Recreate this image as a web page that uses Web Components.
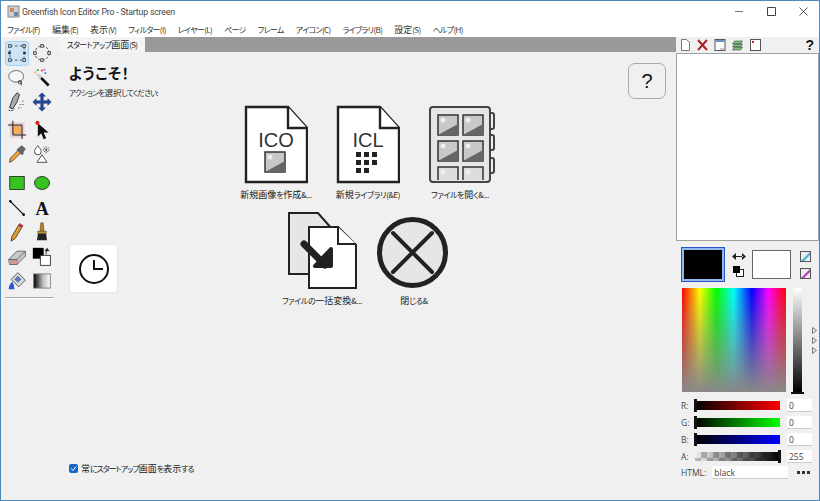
<!DOCTYPE html>
<html lang="ja">
<head>
<meta charset="utf-8">
<title>Greenfish Icon Editor Pro - Startup screen</title>
<style>
    html, body { margin: 0; height: 100%; background: #f0f0f0; overflow: hidden; }
    body { font: 9px "Noto Sans CJK JP", "Noto Sans", sans-serif; color: #222; }
</style>
</head>
<body>
<gf-window>
    <gf-titlebar>Greenfish Icon Editor Pro - Startup screen</gf-titlebar>
    <gf-menubar></gf-menubar>
    <div style="display:flex;flex:1;min-height:0">
        <gf-toolbox></gf-toolbox>
        <gf-startup></gf-startup>
        <gf-sidepanel></gf-sidepanel>
    </div>
</gf-window>

<script>
/**
 * The original UI font has narrow kana and latin next to full-width kanji.
 * Wrap everything that isn't a kanji in a tighter run to get the same widths.
 */
function squeeze(text, spacing = -0.6) {
    return text.replace(/[^\u4e00-\u9fff]+/g, run => `<span style="font-size:.88em;letter-spacing:${spacing}px">${run}</span>`);
}

const ICONS = {
    select: `<rect x="3.5" y="3.5" width="17" height="17" fill="none" stroke="#333" stroke-dasharray="3 3"/><g fill="#fff" stroke="#222"><rect x="2" y="2" width="3" height="3"/><rect x="19" y="2" width="3" height="3"/><rect x="2" y="19" width="3" height="3"/><rect x="19" y="19" width="3" height="3"/><rect x="2" y="11" width="2" height="2"/><rect x="20" y="11" width="2" height="2"/></g>`,
    ellipse: `<circle cx="12" cy="12" r="8.5" fill="none" stroke="#333" stroke-dasharray="3 2"/><g fill="#fff" stroke="#222"><rect x="10.5" y="2" width="3" height="3"/><rect x="10.5" y="19" width="3" height="3"/><rect x="2" y="10.5" width="3" height="3"/><rect x="19" y="10.5" width="3" height="3"/></g>`,
    lasso: `<ellipse cx="11" cy="10" rx="9" ry="7" fill="#f6f6f6" stroke="#555"/><path d="M15 16c2 1 3 3 2 5" fill="none" stroke="#444"/><circle cx="15.500" cy="17" r="2" fill="none" stroke="#333"/>`,
    wand: `<path d="M10 11l10 10" stroke="#111" stroke-width="3.200"/><path d="M6 7l5 5" stroke="#ccc" stroke-width="3.200"/><circle cx="12" cy="3" r="1.300" fill="#e33"/><circle cx="7" cy="2.500" r="1.300" fill="#4a4"/><circle cx="16" cy="6" r="1.300" fill="#39c"/><circle cx="4" cy="5" r="1.200" fill="#da3"/><circle cx="15" cy="2" r="1" fill="#a4c"/>`,
    brushsel: `<path d="M3 19L7 7l5-6 3 2-3 9-5 8z" fill="#aaa" stroke="#222"/><path d="M2 22c3 1 6 0 7-2" fill="none" stroke="#222" stroke-dasharray="2 1"/><path d="M15 15h5M13 19h4M18 11h3" stroke="#666" stroke-dasharray="2 1"/>`,
    move: `<path d="M12 1l4 4h-2.500v5.500H19V8l4 4-4 4v-2.500h-5.500V19H16l-4 4-4-4h2.500v-5.500H5V16l-4-4 4-4v2.500h5.500V5H8z" fill="#1f4a9c" stroke="#10265c" stroke-width=".6"/>`,
    crop: `<rect x="3" y="3" width="18" height="18" fill="#e8b8b0" opacity=".55"/><rect x="7.500" y="7.500" width="9" height="9" fill="#fdb04a" stroke="#c98"/><path d="M7 1v17h16M1 6h17v17" fill="none" stroke="#222" stroke-width="1.200"/>`,
    pointer: `<path d="M7 4v16l4-4 3 7 3-1-3-7h6z" fill="#111"/><circle cx="6.500" cy="3.500" r="2.500" fill="#d22"/>`,
    dropper: `<path d="M4 17L14 7l3 3L7 20l-4 2z" fill="#f3a533" stroke="#333" stroke-width=".9"/><path d="M14 5l4-3 4 4-3 4 1 1-2 2-6-6 2-2z" fill="#667" stroke="#222" stroke-width=".6"/>`,
    replace: `<path d="M7 2c-3 4-4 5-4 7a4 4 0 0 0 8 0c0-2-1-3-4-7z" fill="#fff" stroke="#333"/><path d="M17 3v8M13 7h8M14 4l6 6M20 4l-6 6" stroke="#444" stroke-dasharray="2 1"/><path d="M12 13l6 9H6z" fill="#fff" stroke="#333"/>`,
    rect: `<rect x="3.300" y="4.200" width="17.400" height="15.600" fill="#36c21f" stroke="#222"/>`,
    oval: `<ellipse cx="12" cy="12" rx="9" ry="7.800" fill="#36c21f" stroke="#222"/>`,
    line: `<path d="M4 4l16 16" stroke="#111" stroke-width="1.500"/><circle cx="4" cy="4" r="1.600" fill="#111"/><circle cx="20" cy="20" r="1.600" fill="#111"/>`,
    text: `<text x="12" y="20" text-anchor="middle" font-family="Liberation Serif" font-weight="700" font-size="22" fill="#111">A</text>`,
    pencil: `<path d="M6 17L15 2l4 2.500-9 15-5 3.500z" fill="#e79a2a" stroke="#333"/><path d="M15 2l4 2.500-1.500 2.500-4-2.500z" fill="#d0284a"/>`,
    brush: `<path d="M10.500 1h3l1 10h-5z" fill="#c07a20" stroke="#543" stroke-width=".6"/><rect x="7" y="11" width="10" height="3" fill="#c8962f" stroke="#333" stroke-width=".6"/><path d="M7 14h10l1 8H6z" fill="#222"/>`,
    eraser: `<path d="M2 15L12 5h10v6L12 21H3z" fill="#c9c9c9" stroke="#555"/><path d="M2 15h10l10-10M12 15v6" fill="none" stroke="#555"/><path d="M2.500 15.500h9.500v5H3z" fill="#c99"/>`,
    swapcolor: `<rect x="1" y="1" width="13" height="13" fill="#000"/><rect x="10" y="10" width="12" height="12" fill="#fff" stroke="#222"/><path d="M18 1l3 4h-6z" fill="#222"/><path d="M17 5v4" stroke="#222"/>`,
    fill: `<path d="M13 3l9 9-8 8-9-9z" fill="#d8d8d8" stroke="#444" transform="translate(0 -1)"/><rect x="10" y="7" width="6" height="6" fill="#5a78b5" transform="rotate(45 13 10)"/><path d="M2 22c0-4 2-7 4-9l2 3 1 6z" fill="#2a53d6"/>`,
    gradient: `<defs><linearGradient id="g"><stop offset="0" stop-color="#000"/><stop offset=".3" stop-color="#666"/><stop offset=".55" stop-color="#bbb"/><stop offset="1" stop-color="#fff"/></linearGradient></defs><rect x="2" y="3.500" width="20" height="17" fill="url(#g)" stroke="#777"/>`
};

const toolsTemplate = document.createElement("template");
toolsTemplate.innerHTML = `
    <style>
        :host { display: block; width: 57px; flex: none; padding: 4px 0 0 4px; box-sizing: border-box; }
        .group { display: grid; grid-template-columns: 24px 24px; column-gap: 1px; grid-auto-rows: 24.500px; margin-bottom: 3px; }
        .group.wide { margin-top: 4.500px; }
        .tool { display: flex; align-items: center; justify-content: center; border-radius: 3px; box-sizing: border-box; }
        .tool.on { background: #cce4f7; border: 1px solid #a8d2f3; }
        svg { width: 20px; height: 20px; display: block; }
        hr { width: 49px; margin: 3px 0 0; border: 0; border-top: 1px solid #a9a9a9; border-bottom: 1px solid #fff; }
    </style>
    <div class="group" data-tools="select ellipse lasso wand brushsel move"></div>
    <div class="group" data-tools="crop pointer dropper replace"></div>
    <div class="group wide" data-tools="rect oval line text pencil brush eraser swapcolor fill gradient"></div>
    <hr>
`;

class GfWindow extends HTMLElement {
    constructor() {
        super();
        this.attachShadow({mode: "open"}).innerHTML = `
            <style>
                :host { display: flex; flex-direction: column; height: 501px; box-sizing: border-box; border: 1px solid #4f89bb; background: #f0f0f0; }
            </style>
            <slot></slot>`;
    }
}

class GfTitlebar extends HTMLElement {
    constructor() {
        super();
        this.attachShadow({mode: "open"}).innerHTML = `
            <style>
                :host { display: flex; align-items: center; height: 21px; flex: none; background: #fff; padding-left: 6px; font: 8.800px Roboto, sans-serif; letter-spacing: -.2px; color: #444; }
                .app { width: 13px; height: 13px; margin-right: 2px; }
                .label { flex: 1; }
                .btn { width: 32px; display: flex; justify-content: center; }
                .btn svg { width: 11px; height: 11px; }
            </style>
            <svg class="app" viewBox="0 0 13 13"><rect x="1" y="1" width="11" height="11" fill="#cfcfcf" stroke="#888"/><rect x="3" y="3" width="4" height="4" fill="#c85"/><rect x="7" y="7" width="4" height="4" fill="#68a"/></svg>
            <span class="label"><slot></slot></span>
            <span class="btn"><svg viewBox="0 0 11 11"><path d="M1 5.500h8" stroke="#777"/></svg></span>
            <span class="btn"><svg viewBox="0 0 11 11"><path d="M1.500 1.500h8v8h-8z" fill="none" stroke="#444"/></svg></span>
            <span class="btn"><svg viewBox="0 0 11 11"><path d="M1.500 1.500l8 8M9.500 1.500l-8 8" stroke="#555"/></svg></span>`;
    }
}

class GfMenubar extends HTMLElement {
    constructor() {
        super();
        const items = ["ファイル(F)", "編集(E)", "表示(V)", "フィルター(I)", "レイヤー(L)", "ページ", "フレーム", "アイコン(C)", "ライブラリ(B)", "設定(S)", "ヘルプ(H)"];
        this.attachShadow({mode: "open"}).innerHTML = `
            <style>
                :host { display: flex; height: 15px; flex: none; background: #fff; font: 9px "Noto Sans CJK JP", sans-serif; font-feature-settings: "palt"; color: #333; }
                .item { padding: 0 6px; line-height: 15px; white-space: nowrap; }
                .item:first-child { background: #f0f0f0; padding-left: 4px; }
            </style>
            ${items.map(i => `<div class="item">${squeeze(i)}</div>`).join("")}`;
    }
}

class GfToolbox extends HTMLElement {
    constructor() {
        super();
        this.attachShadow({mode: "open"});
        this.shadowRoot.appendChild(toolsTemplate.content.cloneNode(true));

        this.shadowRoot.querySelectorAll(".group").forEach(group => {
            group.dataset.tools.split(" ").forEach(name => {
                const tool = document.createElement("div");

                tool.className = name === "select" ? "tool on" : "tool";
                tool.innerHTML = `<svg viewBox="0 0 24 24">${ICONS[name]}</svg>`;
                group.appendChild(tool);
            });
        });
    }
}

class GfAction extends HTMLElement {
    constructor() {
        super();
        this.attachShadow({mode: "open"}).innerHTML = `
            <style>
                :host { display: flex; flex-direction: column; align-items: center; width: 92px; height: 106px; }
                .icon { height: 80px; display: flex; justify-content: center; }
                .text { margin-top: 3px; font-size: 9px; line-height: 14px; color: #222; white-space: nowrap; }
            </style>
            <div class="icon"><slot name="icon"></slot></div>
            <div class="text">${squeeze(this.getAttribute("label"), -0.35)}</div>`;
    }
}

class GfStartup extends HTMLElement {
    constructor() {
        super();
        const picture = (x, y) => `<g transform="translate(${x} ${y})"><rect width="20" height="20" fill="#c8c8c8" stroke="#333" stroke-width="1.500"/><circle cx="5" cy="5" r="2.500" fill="#eee"/><path d="M20 9V20H0z" fill="#666"/></g>`;
        const cutPicture = (x, y) => `<path d="M${x} ${y + 13}V${y}h20v13" fill="#ddd" stroke="#333" stroke-width="1.500"/><circle cx="${x + 5}" cy="${y + 5}" r="2.500" fill="#eee"/>`;
        const page = `<path d="M2 2h42l19 21v54H2z" fill="#fff" stroke="#222" stroke-width="2.400"/><path d="M44 2v21h19" fill="#fff" stroke="#222" stroke-width="2.400"/>`;

        this.attachShadow({mode: "open"}).innerHTML = `
            <style>
                :host { display: flex; flex-direction: column; flex: 1; min-width: 0; font: 9px "Noto Sans CJK JP", sans-serif; font-feature-settings: "palt"; }
                .tabs { display: flex; height: 15px; flex: none; background: #999; margin-left: 1px; }
                .tab { width: 86px; background: #f4f4f4; text-align: center; line-height: 15px; color: #222; white-space: nowrap; }
                .head { display: flex; justify-content: space-between; padding: 11px 10px 0 11px; height: 48px; box-sizing: border-box; }
                h1 { margin: 0; font-size: 14.500px; line-height: 20px; font-weight: 700; letter-spacing: .6px; color: #111; }
                p { margin: 3px 0 0; font-size: 8.500px; line-height: 12px; color: #222; }
                .help { width: 38px; height: 36px; box-sizing: border-box; border: 1px solid #aaa; border-radius: 7px; background: #f0f0f0; display: flex; align-items: center; justify-content: center; font: 20px "Liberation Sans", sans-serif; color: #111; }
                .body { flex: 1; display: grid; grid-template-columns: 1fr 276px 1fr; min-height: 0; padding: 5px 0 0 2px; }
                .left { padding: 140px 0 0 10px; }
                .recent { width: 47px; height: 47px; background: #fff; border-radius: 3px; box-shadow: 0 0 2px #ccc; display: flex; align-items: center; justify-content: center; }
                .actions { display: flex; flex-wrap: wrap; justify-content: center; align-content: flex-start; }
                .foot { display: flex; align-items: center; gap: 3px; padding: 0 0 25px 11px; color: #222; }
                .box { width: 9px; height: 9px; border-radius: 2px; background: #1667c5; display: flex; }
            </style>
            <div class="tabs"><div class="tab">${squeeze("スタートアップ画面(S)")}</div></div>
            <div class="head">
                <div><h1>ようこそ！</h1><p>${squeeze("アクションを選択してください:", -0.65)}</p></div>
                <div class="help">?</div>
            </div>
            <div class="body">
                <div class="left"><div class="recent">
                    <svg width="32" height="32" viewBox="0 0 32 32"><circle cx="16" cy="16" r="14" fill="none" stroke="#111" stroke-width="2"/><path d="M16 7v9h9" fill="none" stroke="#111" stroke-width="2"/></svg>
                </div></div>
                <div class="actions">
                    <gf-action label="新規画像を作成&amp;...">
                        <svg slot="icon" width="64" height="80" viewBox="0 0 64 80">${page}<text x="32" y="42" text-anchor="middle" font-family="Liberation Sans" font-size="20" fill="#333">ICO</text><g transform="translate(21 47)"><rect width="20" height="20" fill="#c8c8c8" stroke="#333" stroke-width="1.500"/><circle cx="5" cy="5" r="2.500" fill="#eee"/><path d="M20 9V20H0z" fill="#666"/></g></svg>
                    </gf-action>
                    <gf-action label="新規ライブラリ(&amp;E)">
                        <svg slot="icon" width="64" height="80" viewBox="0 0 64 80">${page}<text x="32" y="42" text-anchor="middle" font-family="Liberation Sans" font-size="20" fill="#333">ICL</text><g fill="#222"><rect x="20" y="47" width="5" height="5"/><rect x="28" y="47" width="5" height="5"/><rect x="36" y="47" width="5" height="5"/><rect x="20" y="55" width="5" height="5"/><rect x="28" y="55" width="5" height="5"/><rect x="36" y="55" width="5" height="5"/><rect x="20" y="63" width="5" height="5"/><rect x="28" y="63" width="5" height="5"/></g></svg>
                    </gf-action>
                    <gf-action label="ファイルを開く&amp;...">
                        <svg slot="icon" width="70" height="80" viewBox="0 0 70 80"><g fill="#f0f0f0" stroke="#444" stroke-width="2"><rect x="61" y="8" width="8" height="16" rx="2"/><rect x="61" y="30" width="8" height="15" rx="2"/><rect x="61" y="53" width="8" height="15" rx="2"/></g><rect x="5" y="2" width="60" height="75" rx="3" fill="#e6e6e6" stroke="#444" stroke-width="2"/>${picture(13, 10)}${picture(38, 10)}${picture(13, 36)}${picture(38, 36)}${cutPicture(13, 62)}${cutPicture(38, 62)}</svg>
                    </gf-action>
                    <gf-action label="ファイルの一括変換&amp;...">
                        <svg slot="icon" width="70" height="80" viewBox="0 0 70 80"><path d="M2 2h29l14 16v45H2z" fill="#e6e6e6" stroke="#222" stroke-width="2"/><path d="M22 16h29l18 18v43H22z" fill="#fff" stroke="#222" stroke-width="2"/><path d="M51 16v17h18" fill="#fff" stroke="#222" stroke-width="2"/><path d="M17 33l21 21" stroke="#222" stroke-width="7" stroke-linecap="round"/><path d="M28 55h16V38z" fill="#222" stroke="#222" stroke-width="4" stroke-linejoin="round"/></svg>
                    </gf-action>
                    <gf-action label="閉じる&amp;">
                        <svg slot="icon" width="80" height="80" viewBox="0 0 80 80"><circle cx="38.500" cy="41.500" r="33" fill="#e6e6e6" stroke="#222" stroke-width="5"/><path d="M19 22l39 39M58 22L19 61" stroke="#222" stroke-width="4" stroke-linecap="round"/></svg>
                    </gf-action>
                </div>
                <div></div>
            </div>
            <div class="foot">
                <span class="box"><svg width="9" height="9" viewBox="0 0 9 9"><path d="M2 4.500l2 2 3-4" fill="none" stroke="#fff"/></svg></span>
                <div>${squeeze("常にスタートアップ画面を表示する", -0.95)}</div>
            </div>`;
    }
}

class GfChannel extends HTMLElement {
    constructor() {
        super();
        const label = this.getAttribute("label");
        const grad = this.getAttribute("grad");
        const value = this.getAttribute("value");
        const right = this.hasAttribute("right");

        this.attachShadow({mode: "open"}).innerHTML = `
            <style>
                :host { display: grid; grid-template-columns: 14px 85px 25px; align-items: center; height: 17px; font: 8.500px "Open Sans", sans-serif; color: #444; }
                .bar { height: 9px; position: relative; background: ${grad}; width: 85px; }
                .mark { position: absolute; top: -2px; ${right ? "right:-1px" : "left:-1px"}; width: 3px; height: 13px; background: #111; }
                .val { margin-left: 7px; width: 25px; height: 13px; background: #fff; border-bottom: 1px solid #ccc; padding-left: 2px; box-sizing: border-box; line-height: 13px; }
            </style>
            <span>${label}</span><div class="bar"><div class="mark"></div></div><div class="val">${value}</div>`;
    }
}

class GfSidepanel extends HTMLElement {
    constructor() {
        super();
        this.attachShadow({mode: "open"}).innerHTML = `
            <style>
                :host { display: flex; flex-direction: column; width: 143px; flex: none; font: 8.500px "Open Sans", sans-serif; color: #444; }
                .bar { display: flex; align-items: center; height: 16px; flex: none; padding-left: 4px; gap: 6px; }
                .bar svg { width: 11px; height: 12px; }
                .bar b { margin-left: auto; margin-right: 5px; font: 700 14px "Liberation Sans", sans-serif; color: #111; }
                .preview { height: 188px; flex: none; box-sizing: border-box; background: #fff; border: 1px solid #a0a0a0; }
                .swatches { display: grid; grid-template-columns: 44px 27px 39px 28px; align-items: center; padding: 6px 0 0 5px; height: 41px; box-sizing: border-box; flex: none; }
                .fg { height: 35px; box-sizing: border-box; background: #000; border: 1px solid #2b50c8; outline: 2px solid #8db9f0; outline-offset: -3px; }
                .bg { height: 29px; box-sizing: border-box; background: #fff; border: 1px solid #666; }
                .mid, .right { display: flex; flex-direction: column; align-items: center; gap: 6px; }
                .field { display: flex; padding: 6px 0 0 6px; flex: none; }
                .rainbow { width: 104px; height: 104px; background: linear-gradient(to bottom, rgba(128,128,128,0), #888), linear-gradient(to right, #f00, #ff0 17%, #0f0 33%, #0ff 50%, #00f 67%, #f0f 83%, #f00); }
                .gray { width: 9px; height: 104px; margin-left: 7px; position: relative; background: linear-gradient(#fff, #000); }
                .gray i { position: absolute; left: -2px; right: -2px; bottom: -2px; height: 2px; background: #111; }
                .tris { align-self: center; margin-left: 10px; display: flex; flex-direction: column; gap: 3px; }
                .channels { padding: 5px 0 0 5px; }
                .html { display: flex; align-items: center; padding: 0 0 0 5px; height: 15px; }
                .html .in { width: 76px; height: 13px; margin-left: 6px; background: #fff; border-bottom: 1px solid #ccc; line-height: 13px; padding-left: 2px; box-sizing: border-box; }
                .dots { margin-left: 9px; display: flex; gap: 2px; }
                .dots i { width: 3px; height: 3px; background: #333; }
            </style>
            <div class="bar">
                <svg viewBox="0 0 11 12"><path d="M1.500.500h5l3 3v8h-8z" fill="#fff" stroke="#777"/></svg>
                <svg viewBox="0 0 11 12"><path d="M1 1l9 10M10 1L1 11" stroke="#a22" stroke-width="2"/></svg>
                <svg viewBox="0 0 11 12" style="width:12px"><rect x=".5" y=".5" width="10" height="11" fill="#fff" stroke="#555"/><rect x="1" y="1" width="9" height="2" fill="#6a8fc0"/><path d="M6 10h1M8 10h1" stroke="#222"/></svg>
                <svg viewBox="0 0 11 12" style="width:12px"><path d="M2 2h8L8 5H0zM2 5h8L8 8H0zM2 8h8l-2 3H0z" fill="#7cc27c" stroke="#444" stroke-width=".6"/></svg>
                <svg viewBox="0 0 11 12"><rect x=".5" y=".5" width="10" height="11" fill="#fff" stroke="#555"/><rect x="2" y="2" width="2" height="2" fill="#d22"/></svg>
                <b>?</b>
            </div>
            <div class="preview"></div>
            <div class="swatches">
                <div class="fg"></div>
                <div class="mid">
                    <svg width="14" height="7" viewBox="0 0 14 7"><path d="M0 3.500L4 0v7zM14 3.500L10 0v7zM3 3h8v1H3z" fill="#222"/></svg>
                    <svg width="11" height="11" viewBox="0 0 11 11"><rect x="3.500" y="3.500" width="7" height="7" fill="#fff" stroke="#222"/><rect x="0" y="0" width="7" height="7" fill="#000"/></svg>
                </div>
                <div class="bg"></div>
                <div class="right">
                    <svg width="11" height="11" viewBox="0 0 11 11"><rect x=".5" y=".5" width="10" height="10" fill="#eee" stroke="#555"/><path d="M1 10L10 1l0 3-6 6z" fill="#3bb8cc"/></svg>
                    <svg width="11" height="11" viewBox="0 0 11 11"><rect x=".5" y=".5" width="10" height="10" fill="#eee" stroke="#555"/><path d="M1 10L10 1l0 3-6 6z" fill="#b23bc0"/></svg>
                </div>
            </div>
            <div class="field">
                <div class="rainbow"></div>
                <div class="gray"><i></i></div>
                <div class="tris">
                    <svg width="5" height="7" viewBox="0 0 5 7"><path d="M.5.500l4 3-4 3z" fill="#eee" stroke="#777"/></svg>
                    <svg width="5" height="7" viewBox="0 0 5 7"><path d="M.5.500l4 3-4 3z" fill="#eee" stroke="#777"/></svg>
                    <svg width="5" height="7" viewBox="0 0 5 7"><path d="M.5.500l4 3-4 3z" fill="#eee" stroke="#777"/></svg>
                </div>
            </div>
            <div class="channels">
                <gf-channel label="R:" value="0" grad="linear-gradient(to right,#000,#f00)"></gf-channel>
                <gf-channel label="G:" value="0" grad="linear-gradient(to right,#000,#0f0)"></gf-channel>
                <gf-channel label="B:" value="0" grad="linear-gradient(to right,#000,#00f)"></gf-channel>
                <gf-channel label="A:" value="255" right grad="linear-gradient(to right,rgba(0,0,0,0),#000),repeating-conic-gradient(#bbb 0 25%,#eee 0 50%) 0 0/12px 12px"></gf-channel>
            </div>
            <div class="html">HTML:<div class="in">black</div><div class="dots"><i></i><i></i><i></i></div></div>`;
    }
}

customElements.define("gf-window", GfWindow);
customElements.define("gf-titlebar", GfTitlebar);
customElements.define("gf-menubar", GfMenubar);
customElements.define("gf-toolbox", GfToolbox);
customElements.define("gf-action", GfAction);
customElements.define("gf-startup", GfStartup);
customElements.define("gf-channel", GfChannel);
customElements.define("gf-sidepanel", GfSidepanel);
</script>
</body>
</html>
